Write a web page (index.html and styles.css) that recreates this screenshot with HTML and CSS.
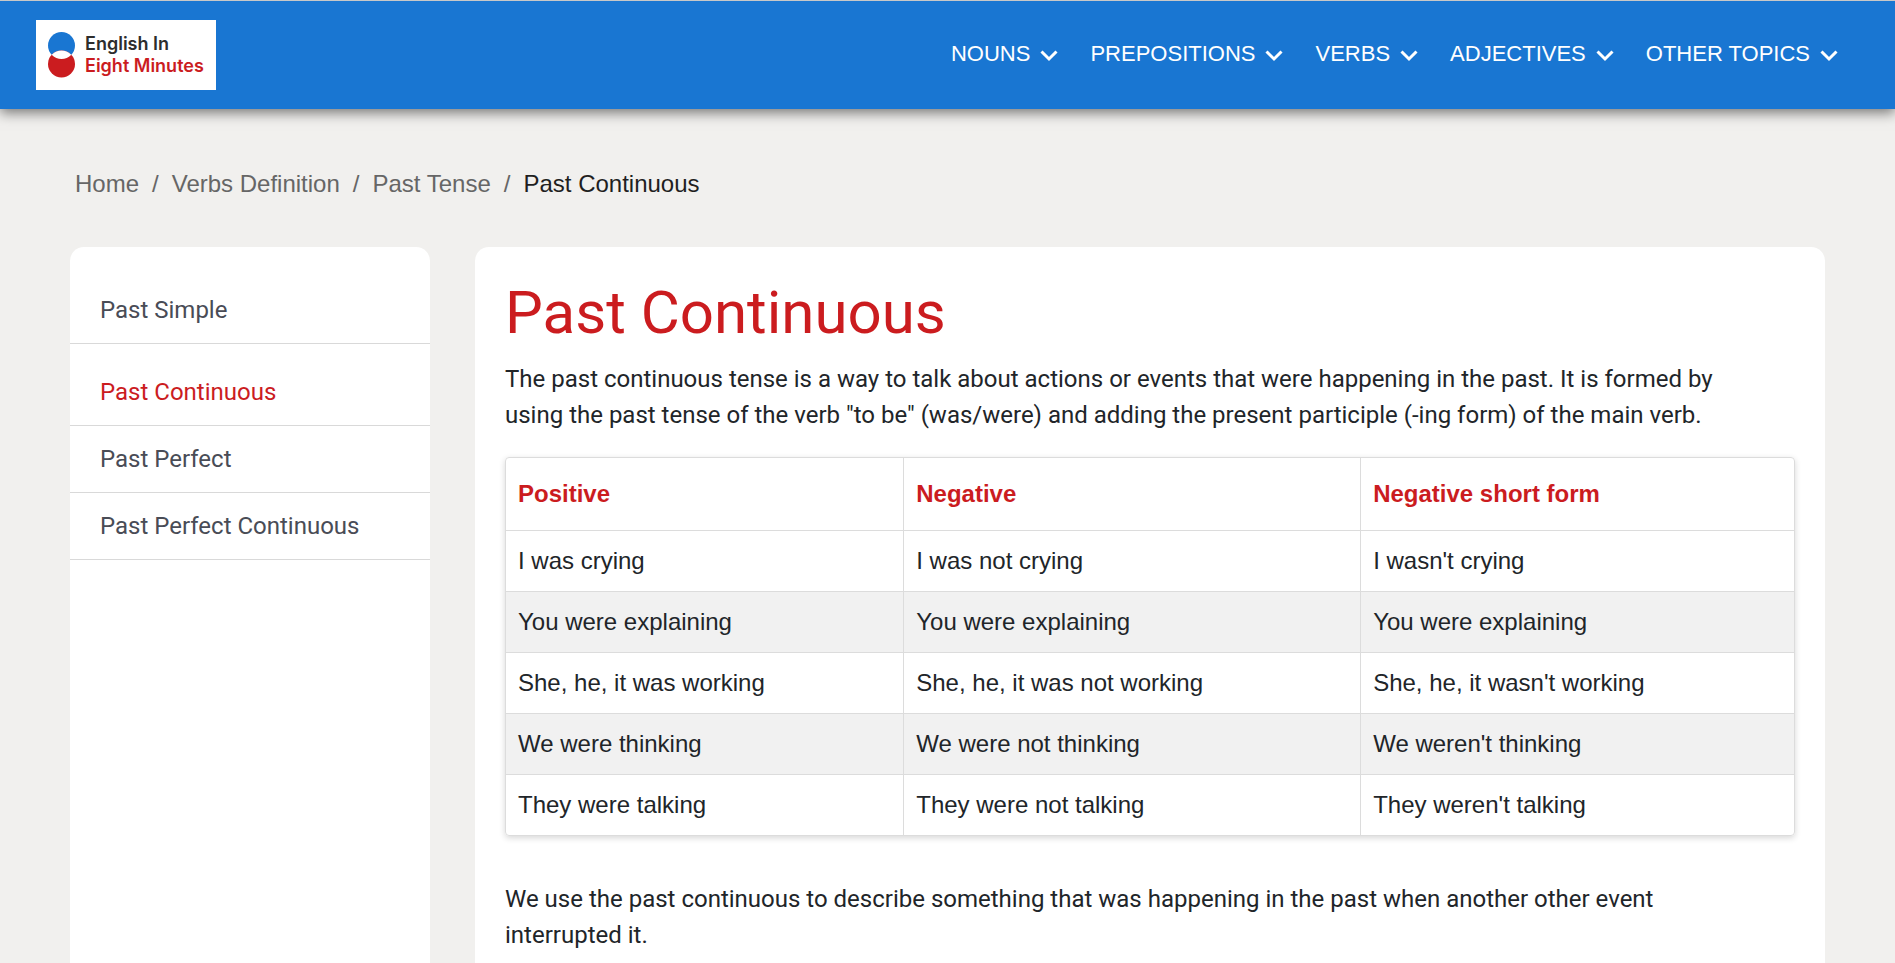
FILE: index.html
```html
<!DOCTYPE html>
<html lang="en">
<head>
<meta charset="utf-8">
<title>Past Continuous - English In Eight Minutes</title>
<link rel="stylesheet" href="styles.css">
</head>
<body>
<svg class="sprite" aria-hidden="true">
  <symbol id="chevron" viewBox="0 0 18 12"><path d="M1.500 1.500 9 9l7.500-7.500" fill="none" stroke="currentColor" stroke-width="3"/></symbol>
</svg>
<header class="topbar">
  <a class="logo" href="#">
    <svg class="logo-mark" viewBox="0 0 27 46" aria-hidden="true">
      <defs><clipPath id="upper"><circle cx="13.500" cy="13.500" r="13.500"/></clipPath></defs>
      <circle cx="13.500" cy="13.500" r="13.500" fill="#1976d2"/>
      <circle cx="13.500" cy="32" r="13.500" fill="#cb1c1f"/>
      <circle cx="13.500" cy="32" r="13.500" fill="#fff" clip-path="url(#upper)"/>
    </svg>
    <span class="logo-text"><span>English In</span><span class="logo-accent">Eight Minutes</span></span>
  </a>
  <nav class="menu" aria-label="Main">
    <button class="menu-item" type="button">NOUNS<svg class="chevron"><use href="#chevron"/></svg></button>
    <button class="menu-item" type="button">PREPOSITIONS<svg class="chevron"><use href="#chevron"/></svg></button>
    <button class="menu-item" type="button">VERBS<svg class="chevron"><use href="#chevron"/></svg></button>
    <button class="menu-item" type="button">ADJECTIVES<svg class="chevron"><use href="#chevron"/></svg></button>
    <button class="menu-item" type="button">OTHER TOPICS<svg class="chevron"><use href="#chevron"/></svg></button>
  </nav>
</header>
<div class="page">
  <nav aria-label="Breadcrumb">
    <ol class="crumbs">
      <li><a href="#">Home</a></li>
      <li><a href="#">Verbs Definition</a></li>
      <li><a href="#">Past Tense</a></li>
      <li aria-current="page">Past Continuous</li>
    </ol>
  </nav>
  <div class="columns">
    <aside class="sidebar">
      <a class="side-link" href="#">Past Simple</a>
      <a class="side-link active" href="#">Past Continuous</a>
      <a class="side-link" href="#">Past Perfect</a>
      <a class="side-link" href="#">Past Perfect Continuous</a>
    </aside>
    <main class="article">
      <h1>Past Continuous</h1>
      <p>The past continuous tense is a way to talk about actions or events that were happening in the past. It is formed by<br>using the past tense of the verb "to be" (was/were) and adding the present participle (-ing form) of the main verb.</p>
      <div class="table-card">
        <table>
          <thead>
            <tr><th scope="col">Positive</th><th scope="col">Negative</th><th scope="col">Negative short form</th></tr>
          </thead>
          <tbody>
            <tr><td>I was crying</td><td>I was not crying</td><td>I wasn't crying</td></tr>
            <tr><td>You were explaining</td><td>You were explaining</td><td>You were explaining</td></tr>
            <tr><td>She, he, it was working</td><td>She, he, it was not working</td><td>She, he, it wasn't working</td></tr>
            <tr><td>We were thinking</td><td>We were not thinking</td><td>We weren't thinking</td></tr>
            <tr><td>They were talking</td><td>They were not talking</td><td>They weren't talking</td></tr>
          </tbody>
        </table>
      </div>
      <p>We use the past continuous to describe something that was happening in the past when another other event<br>interrupted it.</p>
    </main>
  </div>
</div>
</body>
</html>
```
FILE: styles.css
```css
* { box-sizing: border-box; }

html { height: 100%; }

body {
  margin: 0;
  height: 100%;
  overflow: hidden;
  display: flex;
  flex-direction: column;
  background: #f1f0ee;
  color: #212529;
  font: 24px/36px Roboto, sans-serif;
}

a { color: inherit; text-decoration: none; }

.sprite { display: none; }

.topbar {
  display: flex;
  align-items: center;
  justify-content: space-between;
  padding: 19px 57px 19px 36px;
  border-top: 1px solid #c8c8c8;
  background: #1976d2;
  box-shadow: 0 4px 12px rgba(0, 0, 0, 0.5);
}

.logo {
  display: flex;
  align-items: center;
  gap: 10px;
  width: 180px;
  height: 70px;
  padding-left: 12px;
  background: #fff;
}

.logo-mark { width: 27px; height: 46px; flex: none; }

.logo-text {
  display: flex;
  flex-direction: column;
  font: 600 18px/22px Inter, sans-serif;
  color: #2d2d2d;
  white-space: nowrap;
}

.logo-accent { color: #cb1c1f; }

.menu { display: flex; gap: 32px; padding-bottom: 2px; }

.menu-item {
  display: flex;
  align-items: center;
  gap: 10px;
  padding: 0;
  border: 0;
  background: none;
  color: #fff;
  font: 22px/32px "Liberation Sans", Arial, sans-serif;
  cursor: pointer;
}

.chevron { width: 18px; height: 12px; margin-top: 4px; }

.page {
  flex: 1;
  display: flex;
  flex-direction: column;
  padding: 57px 70px 0;
}

.crumbs {
  display: flex;
  margin: 0 0 45px;
  padding: 0 0 0 5px;
  list-style: none;
  font-family: "Liberation Sans", Arial, sans-serif;
  color: #666;
}

.crumbs li + li::before { content: "/"; margin: 0 13px; color: #666; }

.crumbs [aria-current] { color: #1f1f1f; }

.columns {
  flex: 1;
  display: grid;
  grid-template-columns: 360px 1fr;
  gap: 45px;
}

.sidebar,
.article {
  border-radius: 14px 14px 0 0;
  background: #fff;
}

.sidebar { padding-top: 30px; }

.side-link {
  display: block;
  padding: 15px 30px;
  border-bottom: 1px solid #d9d9d9;
  color: #494c56;
}

.side-link.active { padding-top: 30px; color: #cb1c1f; }

.article { padding: 30px 30px 0; }

h1 {
  margin: 0 0 12px;
  color: #cb1c1f;
  font-weight: 400;
  font-size: 60px;
  line-height: 72px;
}

p { margin: 0; }

.table-card {
  margin: 24px 0 45px;
  border: 1px solid #dcdcdc;
  border-radius: 4px;
  overflow: hidden;
  box-shadow: 0 2px 6px rgba(0, 0, 0, 0.16);
}

table {
  width: 100%;
  border-collapse: separate;
  border-spacing: 0;
  font-family: "Liberation Sans", Arial, sans-serif;
}

th, td {
  padding: 12px;
  border-bottom: 1px solid #dcdcdc;
  border-right: 1px solid #dcdcdc;
  text-align: left;
}

th { padding: 18px 12px; color: #cb1c1f; font-weight: 700; }

th:last-child, td:last-child { border-right: 0; }

tr:last-child td { border-bottom: 0; }

thead tr:last-child th { border-bottom: 1px solid #dcdcdc; }

tbody tr:nth-child(even) { background: #f1f1f1; }
```
